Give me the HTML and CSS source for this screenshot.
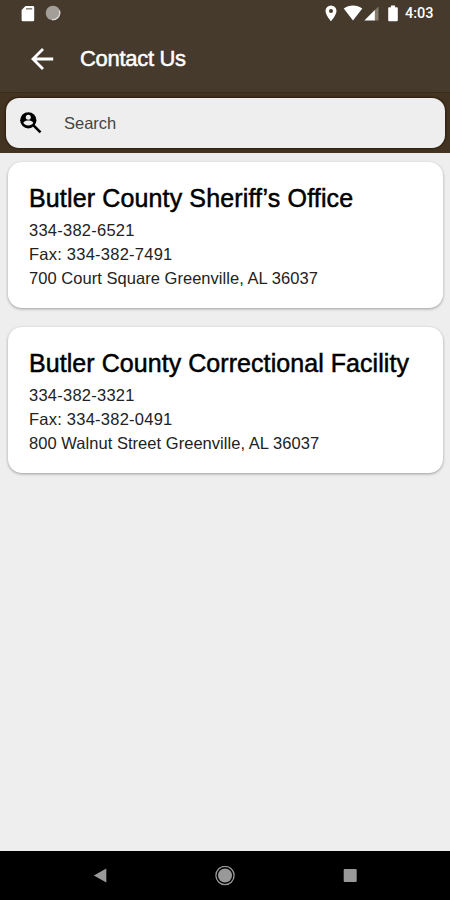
FILE: index.html
```html
<!DOCTYPE html>
<html lang="en">
<head>
  <meta charset="UTF-8" />
  <meta name="viewport" content="width=device-width, initial-scale=1.0"/>
  <title>Contact Us</title>
  <link rel="stylesheet" href="styles.css">
</head>
<body>
  <div class="app">
    <div class="status-bar">
      <div class="status-left">
        <svg class="sd-card" width="14" height="17" viewBox="0 0 14 17">
          <path fill="#fff" d="M4.500 1H12a1.200 1.200 0 0 1 1.200 1.200V15a1.200 1.200 0 0 1-1.200 1.200H1.800A1.200 1.200 0 0 1 .6 15V5z"/>
          <path stroke="#8d867d" stroke-width="1.600" d="M5 3.800h6.200"/>
        </svg>
        <svg class="sync" width="16" height="16" viewBox="0 0 16 16">
          <circle cx="8" cy="8" r="7.300" fill="#a39e98"/>
          <path fill="none" stroke="#ddd9d5" stroke-width="1.300" d="M14.400 5.500A7 7 0 0 1 7 14.600"/>
        </svg>
      </div>
      <div class="status-right">
        <svg class="pin" width="12" height="17" viewBox="0 0 12 17">
          <path fill="#fff" fill-rule="evenodd" d="M6 .5A5.500 5.500 0 0 0 .5 6C.5 10 6 16.300 6 16.300S11.500 10 11.500 6A5.500 5.500 0 0 0 6 .5zM6 4a2 2 0 1 1 0 4 2 2 0 0 1 0-4z"/>
        </svg>
        <svg class="wifi" width="20" height="16" viewBox="0 0 20 16">
          <path fill="#fff" d="M.7 3.400C6-.5 14-.5 19.300 3.400L10 15.500z"/>
        </svg>
        <svg class="signal" width="15" height="15" viewBox="0 0 15 15">
          <path fill="#857c70" d="M14.500.5v14H10V5z"/>
          <path fill="#fff" d="M.3 14.500 10.800 4v10.500z"/>
        </svg>
        <svg class="battery" width="10" height="17" viewBox="0 0 10 17">
          <path fill="#fff" d="M3 .5h4v1.800h1.800q1 0 1 1v12q0 1-1 1H1.200q-1 0-1-1v-12q0-1 1-1H3z"/>
        </svg>
        <span class="clock">4:03</span>
      </div>
    </div>

    <header class="toolbar">
      <svg class="back" width="24" height="24" viewBox="0 0 24 24">
        <path fill="none" stroke="#fff" stroke-width="2.800" d="M23.200 12H3M13 2 3 12l10 10"/>
      </svg>
      <h1>Contact Us</h1>
    </header>

    <div class="search-wrap">
      <label class="search-box">
        <svg class="search-icon" width="22" height="22" viewBox="0 0 22 22">
          <path stroke="#000" stroke-width="2.600" d="m13.500 13.300 7 7"/>
          <circle cx="8.300" cy="8.300" r="8.100"/>
          <circle cx="8.300" cy="5.300" r="2.500" fill="#eee"/>
          <path fill="#eee" d="M3.300 10.800C4 9 6.500 8.500 8.300 8.500s4.300.5 5 2.300c-1 1.700-3 2.700-5 2.700s-4-1-5-2.700z"/>
        </svg>
        <input type="text" placeholder="Search" />
      </label>
    </div>

    <main class="contacts">
      <section class="card">
        <h2 class="office">Butler County Sheriff’s Office</h2>
        <p class="phone">334-382-6521</p>
        <p class="phone">Fax: 334-382-7491</p>
        <p class="address">700 Court Square Greenville, AL 36037</p>
      </section>
      <section class="card">
        <h2>Butler County Correctional Facility</h2>
        <p class="phone">334-382-3321</p>
        <p class="phone">Fax: 334-382-0491</p>
        <p class="address">800 Walnut Street Greenville, AL 36037</p>
      </section>
    </main>

    <nav class="nav-bar">
      <svg width="20" height="20" viewBox="0 0 20 20">
        <path fill="#999" d="M3.800 9.500 16.300 2.500v14z"/>
      </svg>
      <svg width="20" height="20" viewBox="0 0 20 20">
        <circle cx="10" cy="9.500" r="9.100" fill="none" stroke="#999" stroke-width="1.300"/>
        <circle cx="10" cy="9.500" r="7" fill="#999"/>
      </svg>
      <svg width="20" height="20" viewBox="0 0 20 20">
        <rect x="3.700" y="3" width="13" height="13" rx="1" fill="#999"/>
      </svg>
    </nav>
  </div>
</body>
</html>
```

FILE: styles.css
```css
:root {
  --brown: #463a2c;
  --bg: #eeeeee;
  --text: #222;
}

* {
  box-sizing: border-box;
}

body {
  margin: 0;
  font-family: "Liberation Sans", Arial, sans-serif;
  background-color: var(--bg);
  color: var(--text);
}

h1, h2, p {
  margin: 0;
  font-weight: normal;
  white-space: nowrap;
}

svg {
  display: block;
  flex: none;
}

.app {
  display: flex;
  flex-direction: column;
  height: 900px;
}

.status-bar {
  display: flex;
  justify-content: space-between;
  align-items: center;
  height: 26px;
  padding: 0 16px 0 21px;
  background-color: var(--brown);
  color: #fff;
}

.status-left, .status-right {
  display: flex;
  align-items: center;
}

.sync {
  margin-left: 10px;
}

.wifi {
  margin-left: 6px;
}

.signal {
  margin-left: 1px;
}

.battery {
  margin-left: 9px;
}

.clock {
  width: 29px;
  margin-left: 7px;
  font-family: Roboto, sans-serif;
  font-size: 14.5px;
  font-weight: 500;
}

.toolbar {
  display: flex;
  align-items: center;
  height: 66px;
  padding-left: 30px;
  background-color: var(--brown);
  color: #fff;
}

.toolbar h1 {
  margin-left: 26px;
  font-size: 22px;
  letter-spacing: -0.3px;
  -webkit-text-stroke: 0.5px #fff;
}

.search-wrap {
  height: 61px;
  padding: 5px 5px 0 6px;
  background-color: #433422;
  border-top: 1px solid #3a2c1c;
}

.search-box {
  display: flex;
  align-items: center;
  height: 50px;
  padding-left: 14px;
  background-color: var(--bg);
  border-radius: 13px;
  box-shadow: 0 0 2px 1px #2d1f0c;
}

.search-box input {
  margin-left: 22px;
  padding: 0;
  border: none;
  background: none;
  font-family: inherit;
  font-size: 16.5px;
  outline: none;
}

.search-box input::placeholder {
  color: #444;
}

.contacts {
  flex: 1;
  display: flex;
  flex-direction: column;
  gap: 19px;
  padding: 9px 7px 0 8px;
}

.card {
  height: 146px;
  padding: 21px 21px 0;
  background-color: #fff;
  border-radius: 14px;
  box-shadow: 0 1px 3px rgba(0, 0, 0, 0.35);
}

.card h2 {
  margin-bottom: 4px;
  color: #000;
  font-size: 25px;
  line-height: 31px;
  letter-spacing: 0.06px;
  -webkit-text-stroke: 0.5px #000;
}

.card h2.office {
  letter-spacing: 0.14px;
}

.card p {
  font-size: 16.5px;
  line-height: 24px;
}

.card .phone {
  letter-spacing: 0.24px;
}

.card .address {
  letter-spacing: 0.04px;
}

.nav-bar {
  display: flex;
  justify-content: space-between;
  align-items: center;
  height: 49px;
  padding: 0 90px;
  background-color: #000;
}
```
